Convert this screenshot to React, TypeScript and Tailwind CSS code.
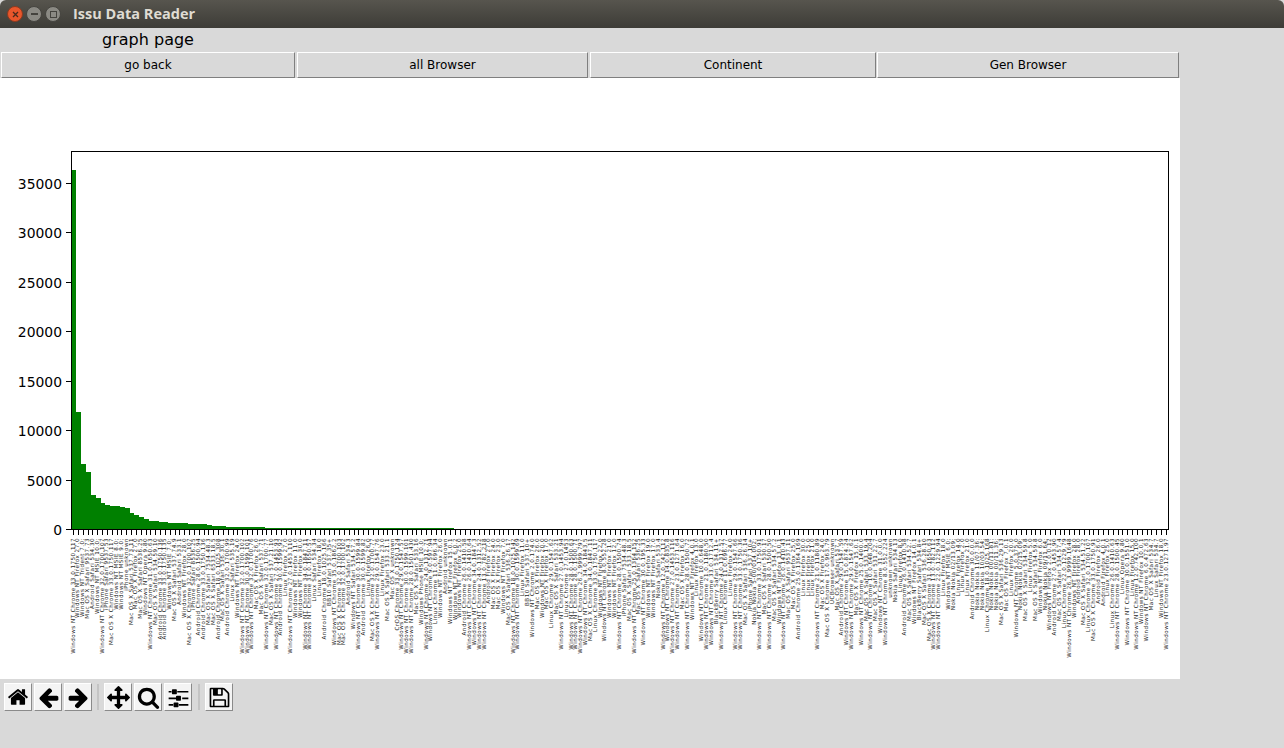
const LABELS = [
"Windows NT Chrome 33.0.1750.117","Windows NT Firefox 27.0","Windows NT Trident 7.0;","Mac OS X Safari 9537.73","Android Safari 534.30","Windows NT MSIE 10.0;","Windows NT Chrome 32.0.1700.107","iPhone Safari 9537.53","Mac OS X Chrome 33.0.1750.117","Windows NT MSIE 8.0;","Windows NT MSIE 9.0;","iPhone unknown","Mac OS X Safari 537.73.11","Mac OS X Firefox 27.0","Mac OS X Safari 8536.25","Windows NT Opera 9.80","Windows NT Chrome 31.0.1650.63","Mac OS X Safari 534.59.10","Android Chrome 33.0.1750.136","Android Chrome 33.0.1750.135","Windows NT MSIE 7.0;","Mac OS X Safari 537.74.9","Android Safari 533.1","Windows NT Firefox 28.0","Mac OS X Chrome 32.0.1700.107","iPhone Safari 8536.25","Android Chrome 28.0.1500.94","Android Chrome 33.0.1750.136","Mac OS X Safari 7534.48.3","Mac OS X Safari 6533.18.5","Android Chrome 18.0.1025.308","Mac OS X Safari 536.30.1","Android Chrome 32.0.1700.99","Linux Safari 535.19","Windows NT Firefox 24.0","Windows NT Chrome 32.0.1700.102","Windows NT Chrome 30.0.1599.101","Windows NT Chrome 32.0.1700.76",
"Mac OS X Firefox 26.0","Mac OS X Safari 537.71","Windows NT Chrome 32.0.1700.77","Mac OS X Safari 537.21.10","Windows NT Chrome 27.0.1453.93","Android Chrome 30.0.1599.92","Linux Firefox 27.0","Windows NT Chrome 27.0.1453.110","Windows NT Firefox 11.0","Windows NT Firefox 30.0","Windows NT Chrome 34.0.1847.11","Windows NT Chrome 31.0.1650.57","Linux Safari 534.34","Linux Firefox 18.0","Android Chrome 18.0.1025.166","BB10 Safari 537.35+","Windows NT Chrome 35.0.1862.2","Mac OS X Chrome 32.0.1700.103","Mac OS X Chrome 32.0.1700.102","Android Safari 534.3","Windows NT Safari 534.57.2","Windows NT Chrome 30.0.1599.84","Android Chrome 30.0.1599.82","Linux Firefox 26.0","Mac OS X Chrome 32.0.1700.77","Windows NT Chrome 29.0.1547.76","Linux Firefox 23.0","Mac OS X Safari 533.21.1","Mac OS X unknown","CrOS Chrome 33.0.1750.124","Windows NT Chrome 29.0.1547.57","Windows NT Chrome 30.0.1599.101","Windows NT Chrome 28.0.1501.430","Mac OS X Safari 533.16","Windows Phone MSIE 10.0;","Windows NT Chrome 24.0.1312.71","Windows NT Chrome 9.0.597.94","Linux Chrome 11.0.696.34","Windows NT Firefox 26.0","Android unknown","Windows NT Firefox 15.0.1",
"Windows NT Firefox 6.0.2","Windows NT Firefox 25.0","Android Chrome 26.0.1410.58","Windows NT Chrome 26.0.1410.64","Windows NT Chrome 34.0.1847.3","Windows NT Chrome 24.0.1312.52","Windows NT Chrome 13.0.782.218","Android Firefox 27.0","Mac OS X Firefox 24.0","Mac OS X Firefox 23.0","Windows NT Firefox 7.0","Mac OS X Safari 536.26.17","Windows NT Chrome 18.0.1025.142","Windows NT Chrome 30.0.1599.69","Linux Firefox 11.0","BB10 Safari 537.10+","Windows NT Chrome 2.0.174.0","Mac OS X Firefox 26.0","Windows NT Firefox 20.0","Mac OS X Firefox 17.0","Linux Chrome 29.0.1547.62","Mac OS X Safari 533.21","Windows NT Chrome 27.0.1453.94","Linux Chrome 27.0.1453","Windows NT Chrome 28.0.1500.63","Windows NT Chrome 28.0.1500.71","Windows NT Chrome 26.2.9999.797","Windows NT Chrome 34.0.1843.5","Mac OS X Chrome 34.0.1847.11","Linux Chrome 33.0.1750.117","Windows NT Firefox 22.0","Windows NT Chrome 8.0.552.28","Windows NT Firefox 21.0","Windows NT Firefox 12.0","Windows NT Chrome 28.0.1500.74","iPhone Safari 7534.48.3","Mac OS X Safari 533.18.5","Windows NT Chrome 25.0.1364.152","Mac OS X Safari 536.25","Windows NT Chrome 30.0.195.33","Windows NT Firefox 19.0",
"Windows NT Firefox 17.0","Nokia Safari 533.4","Windows NT Chrome 12.0.742.112","Windows NT Chrome 14.0.835.8","Windows NT Chrome 27.0.1453.116","Windows NT Chrome 23.0.1271.64","Mac OS X Firefox 16.0","Windows NT Chrome 28.0.1500.72","Windows NT Firefox 4.0.1","Linux Firefox 13.0","Windows NT Chrome 10.0.648.0","Windows NT Chrome 21.0.1180.50","Windows NT Chrome 33.0.1712.4","BlackBerry Safari 534.11+","Windows NT Chrome 24.0.1312.57","Linux Chrome 11.0.696.77","Linux Firefox 24.0","Windows NT Chrome 29.0.1547.66","Windows NT Chrome 33.0.1750.36","Mac OS X Safari 536.26.14","iPhone Safari 537.10+","Nokia Nokia 5-00/014.002;","Windows NT Chrome 33.0.1750.91","Mac OS X Safari 530.17","Windows NT Chrome 28.0.1500.50","Mac OS X Safari 534.57.2","Windows NT Firefox 13.0.1","Windows NT Chrome 26.0.1410.43","Mac OS X Safari 9537.11","Mac OS X Firefox 25.0","Android Chrome 25.0.1364.169","Linux Firefox 30.0","Linux Firefox 25.0","Linux Firefox 21.0","Windows NT Chrome 21.0.1180.89","Mac OS X Firefox 24.0","Mac OS X Chrome 17.0.963.79","UCBrowser unknown","Mac OS X Safari 537.7","Android Chrome 29.0.1547.59","Windows NT Chrome 15.0.874.24",
"Windows NT Chrome 29.0.1547.62","Mac OS X Firefox 15.0.1","Windows NT Chrome 25.0.1400.0","Mac OS X Safari 533.19.4","Windows NT Chrome 10.0.648.204","Mac OS X Safari 531.22.7","Windows NT Chrome 31.0.0.0","Windows NT Chrome 8.0.552.224","unknown unknown","Nokia Safari 534.13","Linux Firefox 8.0","Android Chrome 26.0.1410.58","Mac OS X Safari 534.52.7","Windows NT Firefox 14.0.1","BlackBerry Safari 534.8+","Mac OS X Safari 536.28.10","Mac OS X Chrome 31.0.1650.63","Windows NT Chrome 13.0.782.112","Windows NT Chrome 22.0.1229.94","Linux Firefox 18.0","Windows NT MSIE 6.0;","Nokia Nokia 02/13.09;","Linux Firefox 14.0","Linux Firefox 2.0","Linux Firefox 21.0","Android Chrome 30.0.0.0","Nokia Nokia 11/07.36;","Nokia Nokia 10/03.54;","Linux Chrome 18.0.1025.168","Nokia Nokia 00/11.81;","Nokia Nokia 00/11.36;","Mac OS X Safari 536.29.13","Mac OS X Firefox 7.0.1","Linux Firefox 20.0","Windows NT Chrome 5.0.375.0","Nokia Nokia 02/15.09;","Mac OS X Safari 534.59.8","Linux Firefox 5.0",
"Mac OS X Safari 534.59.8","Windows NT Firefox 6.0","Nokia Nokia 09/11.64;","Windows NT Firefox 2.0.0.12","Android Chrome 27.0.1453.90","Mac OS X Safari 534.57.4","Linux Chrome 22.0.1229.79","Windows NT Chrome 26.3.9999.1648","Windows NT Firefox 28.0","Android Firefox 28.0","Mac OS X Safari 534.51.22","Linux Chrome 32.0.1700.107","Mac OS X Chrome 33.0.1750.91","Android Firefox 26.0","Android Firefox 4.0.1","Linux Firefox 25.0","Linux Chrome 26.0.1410.63","Windows NT Chrome 28.0.1500.45","Linux Opera 9.80","Windows NT Chrome 30.0.1551.0","Linux Firefox 15.0","Windows NT Chrome 12.0.742.100","Windows NT Firefox 10.0.1","Windows NT Chrome 6.0.472.63","Mac OS X Safari 534.7","Linux Safari 534.7","Windows NT Firefox 18.0","Windows NT Chrome 23.0.1271.97",
];

const HEIGHTS = [359,117,65,57,34,31,26,24,23,23,22,21,16,14,12,10,8,8,7,7,6,6,6,6,5,5,5,5,4,3,3,3,2,2,2,2,2,2,2,2];
const STEP = 1093 / (LABELS.length - 1);
const X0 = 71;
const BASE = 451;
const YTICKS = [0, 5000, 10000, 15000, 20000, 25000, 30000, 35000];

function barHeight(i: number) {
  if (i < HEIGHTS.length) return HEIGHTS[i];
  return X0 + i * STEP < 453 ? 1 : 0;
}

function Chart() {
  const font = "'DejaVu Sans', sans-serif";
  return (
    <svg width="1180" height="601" viewBox="0 0 1180 601" className="block">
      {LABELS.map((_, i) => {
        const h = barHeight(i);
        return h > 0 ? (
          <rect key={i} x={X0 + i * STEP} y={BASE - h} width={STEP + 0.5} height={h} fill="#008000" shapeRendering="crispEdges" />
        ) : null;
      })}
      <rect x="71.5" y="73.5" width="1097" height="378" fill="none" stroke="#000" strokeWidth="1" />
      {YTICKS.map((t) => {
        const y = Math.round(BASE - t * 0.009886) + 0.5;
        return (
          <g key={t}>
            <line x1="66" x2="71" y1={y} y2={y} stroke="#000" />
            <text x="62" y={y + 5} textAnchor="end" fontSize="13.9" fontFamily={font} fill="#000">{t}</text>
          </g>
        );
      })}
      <g className="opacity-[0.99]">
        {LABELS.map((l, i) => {
          const cx = 73.5 + i * STEP;
          const tx = Math.round(cx - 0.5) + 0.5;
          return (
            <g key={i}>
              <line x1={tx} x2={tx} y1="452" y2="457" stroke="#000" />
              <text transform={`translate(${(cx + 1).toFixed(2)} 460) rotate(-90)`} textAnchor="end" fontSize="5.6" letterSpacing="0.48" fontFamily={font} fill="#1c1c1c">{l}</text>
            </g>
          );
        })}
      </g>
    </svg>
  );
}

function TkButton({ label, className }: { label: string; className: string }) {
  return (
    <button className={`h-[26px] flex items-center justify-center bg-[#d9d9d9] border border-t-white border-l-white border-r-[#7f7f7f] border-b-[#7f7f7f] text-[12px] text-black font-['DejaVu_Sans',sans-serif] ${className}`}>
      {label}
    </button>
  );
}

function ToolIcon({ d, size = 23 }: { d: string; size?: number }) {
  return (
    <button className="w-[28px] h-[28px] flex items-center justify-center bg-[#f4f4f4] border border-t-white border-l-white border-r-[#8a8a8a] border-b-[#8a8a8a]">
      <svg width={size} height={size} viewBox="0 0 1792 1792" fill="#000"><path d={d} /></svg>
    </button>
  );
}

const ICONS = {
  home: "M1472 992v480q0 26-19 45t-45 19h-384v-384h-256v384h-384q-26 0-45-19t-19-45v-480q0-1 .5-3t.5-3l575-474 575 474q1 2 1 6zm223-69l-62 74q-8 9-21 11h-3q-13 0-21-7l-692-577-692 577q-12 8-24 7-13-2-21-11l-62-74q-8-10-7-23.5t11-21.5l719-599q32-26 76-26t76 26l244 204v-195q0-14 9-23t23-9h192q14 0 23 9t9 23v408l219 182q10 8 11 21.5t-7 23.5z",
  left: "M1664 896v128q0 53-32.5 90.5t-84.5 37.5h-704l293 294q38 36 38 90t-38 90l-75 76q-37 37-90 37-52 0-91-37l-651-652q-37-37-37-90 0-52 37-91l651-650q38-38 91-38 52 0 90 38l75 74q38 38 38 91t-38 91l-293 293h704q52 0 84.5 37.5t32.5 90.5z",
  right: "M1600 960q0 54-37 91l-651 651q-39 37-91 37-51 0-90-37l-75-75q-38-38-38-91t38-91l293-293h-704q-52 0-84.5-37.5t-32.5-90.5v-128q0-53 32.5-90.5t84.5-37.5h704l-293-294q-38-36-38-90t38-90l75-75q38-38 90-38 53 0 91 38l651 651q37 35 37 90z",
  move: "M1792 896q0 26-19 45l-256 256q-19 19-45 19t-45-19-19-45v-128h-384v384h128q26 0 45 19t19 45-19 45l-256 256q-19 19-45 19t-45-19l-256-256q-19-19-19-45t19-45 45-19h128v-384h-384v128q0 26-19 45t-45 19-45-19l-256-256q-19-19-19-45t19-45l256-256q19-19 45-19t45 19 19 45v128h384v-384h-128q-26 0-45-19t-19-45 19-45l256-256q19-19 45-19t45 19l256 256q19 19 19 45t-19 45-45 19h-128v384h384v-128q0-26 19-45t45-19 45 19l256 256q19 19 19 45z",
  search: "M1216 832q0-185-131.5-316.5t-316.5-131.5-316.5 131.5-131.5 316.5 131.5 316.5 316.5 131.5 316.5-131.5 131.5-316.5zm512 832q0 52-38 90t-90 38q-54 0-90-38l-343-342q-179 124-399 124-143 0-273.5-55.5t-225-150-150-225-55.5-273.5 55.5-273.5 150-225 225-150 273.5-55.5 273.5 55.5 225 150 150 225 55.5 273.5q0 220-124 399l343 343q37 37 37 90z",
  sliders: "M480 1408v128h-352v-128h352zm352-128q26 0 45 19t19 45v256q0 26-19 45t-45 19h-256q-26 0-45-19t-19-45v-256q0-26 19-45t45-19h256zm160-384v128h-864v-128h864zm-640-512v128h-224v-128h224zm1312 1024v128h-736v-128h736zm-960-1152q26 0 45 19t19 45v256q0 26-19 45t-45 19h-256q-26 0-45-19t-19-45v-256q0-26 19-45t45-19h256zm320 512q26 0 45 19t19 45v256q0 26-19 45t-45 19h-256q-26 0-45-19t-19-45v-256q0-26 19-45t45-19h256zm640 128v128h-480v-128h480zm0-512v128h-864v-128h864z",
  save: "M512 1536h768v-384h-768v384zm896 0h128v-896q0-14-10-38.5t-20-34.5l-281-281q-10-10-34-20t-39-10v416q0 40-28 68t-68 28h-576q-40 0-68-28t-28-68v-416h-128v1280h128v-416q0-40 28-68t68-28h832q40 0 68 28t28 68v416zm-384-928v-320q0-13-9.5-22.5t-22.5-9.5h-192q-13 0-22.5 9.5t-9.5 22.5v320q0 13 9.5 22.5t22.5 9.5h192q13 0 22.5-9.5t9.5-22.5zm640 32v928q0 40-28 68t-68 28h-1344q-40 0-68-28t-28-68v-1344q0-40 28-68t68-28h928q40 0 88 20t76 48l280 280q28 28 48 76t20 88z",
};

export default function App() {
  return (
    <div className="w-[1284px] h-[748px] overflow-hidden bg-[#d9d9d9] flex flex-col">
      <div className="h-[28px] shrink-0 flex items-center rounded-t-[6px] bg-gradient-to-b from-[#57554e] to-[#3d3c37] pl-[7px]">
        <div className="flex items-center gap-[3px]">
          <span className="w-[16px] h-[16px] rounded-full bg-[#e9562b] border border-[#8c3a20] flex items-center justify-center">
            <svg width="7" height="7" viewBox="0 0 7 7" stroke="#4a2a1c" strokeWidth="1.3"><path d="M1 1l5 5M6 1l-5 5" /></svg>
          </span>
          <span className="w-[16px] h-[16px] rounded-full bg-[#8b8a84] border border-[#45443f] flex items-center justify-center">
            <span className="w-[7px] h-[1.5px] bg-[#44433e]" />
          </span>
          <span className="w-[16px] h-[16px] rounded-full bg-[#8b8a84] border border-[#45443f] flex items-center justify-center">
            <span className="w-[7px] h-[7px] border border-[#44433e]" />
          </span>
        </div>
        <span className="ml-[12px] text-[14.5px] font-bold text-[#dfdbd2] font-['Open_Sans',sans-serif]">Issu Data Reader</span>
      </div>
      <div className="h-[24px] shrink-0 w-[296px] flex items-center justify-center text-[16px] text-black font-['DejaVu_Sans',sans-serif]">graph page</div>
      <div className="h-[26px] shrink-0 w-[1180px] pl-[1px] flex">
        <TkButton label="go back" className="w-[294px]" />
        <TkButton label="all Browser" className="w-[291px] ml-[2px]" />
        <TkButton label="Continent" className="w-[286px] ml-[2px]" />
        <TkButton label="Gen Browser" className="w-[302px] ml-[1px]" />
      </div>
      <div className="w-[1180px] h-[601px] shrink-0 bg-white overflow-hidden">
        <Chart />
      </div>
      <div className="flex items-center pl-[4px] pt-[4px]">
        <div className="flex gap-[2px]">
          <ToolIcon d={ICONS.home} size={22} />
          <ToolIcon d={ICONS.left} />
          <ToolIcon d={ICONS.right} />
        </div>
        <div className="w-[2px] h-[26px] bg-[#c4c4c4] ml-[5px] mr-[5px]" />
        <div className="flex gap-[2px]">
          <ToolIcon d={ICONS.move} />
          <ToolIcon d={ICONS.search} />
          <ToolIcon d={ICONS.sliders} />
        </div>
        <div className="w-[2px] h-[26px] bg-[#c4c4c4] ml-[6px] mr-[5px]" />
        <ToolIcon d={ICONS.save} />
      </div>
    </div>
  );
}
